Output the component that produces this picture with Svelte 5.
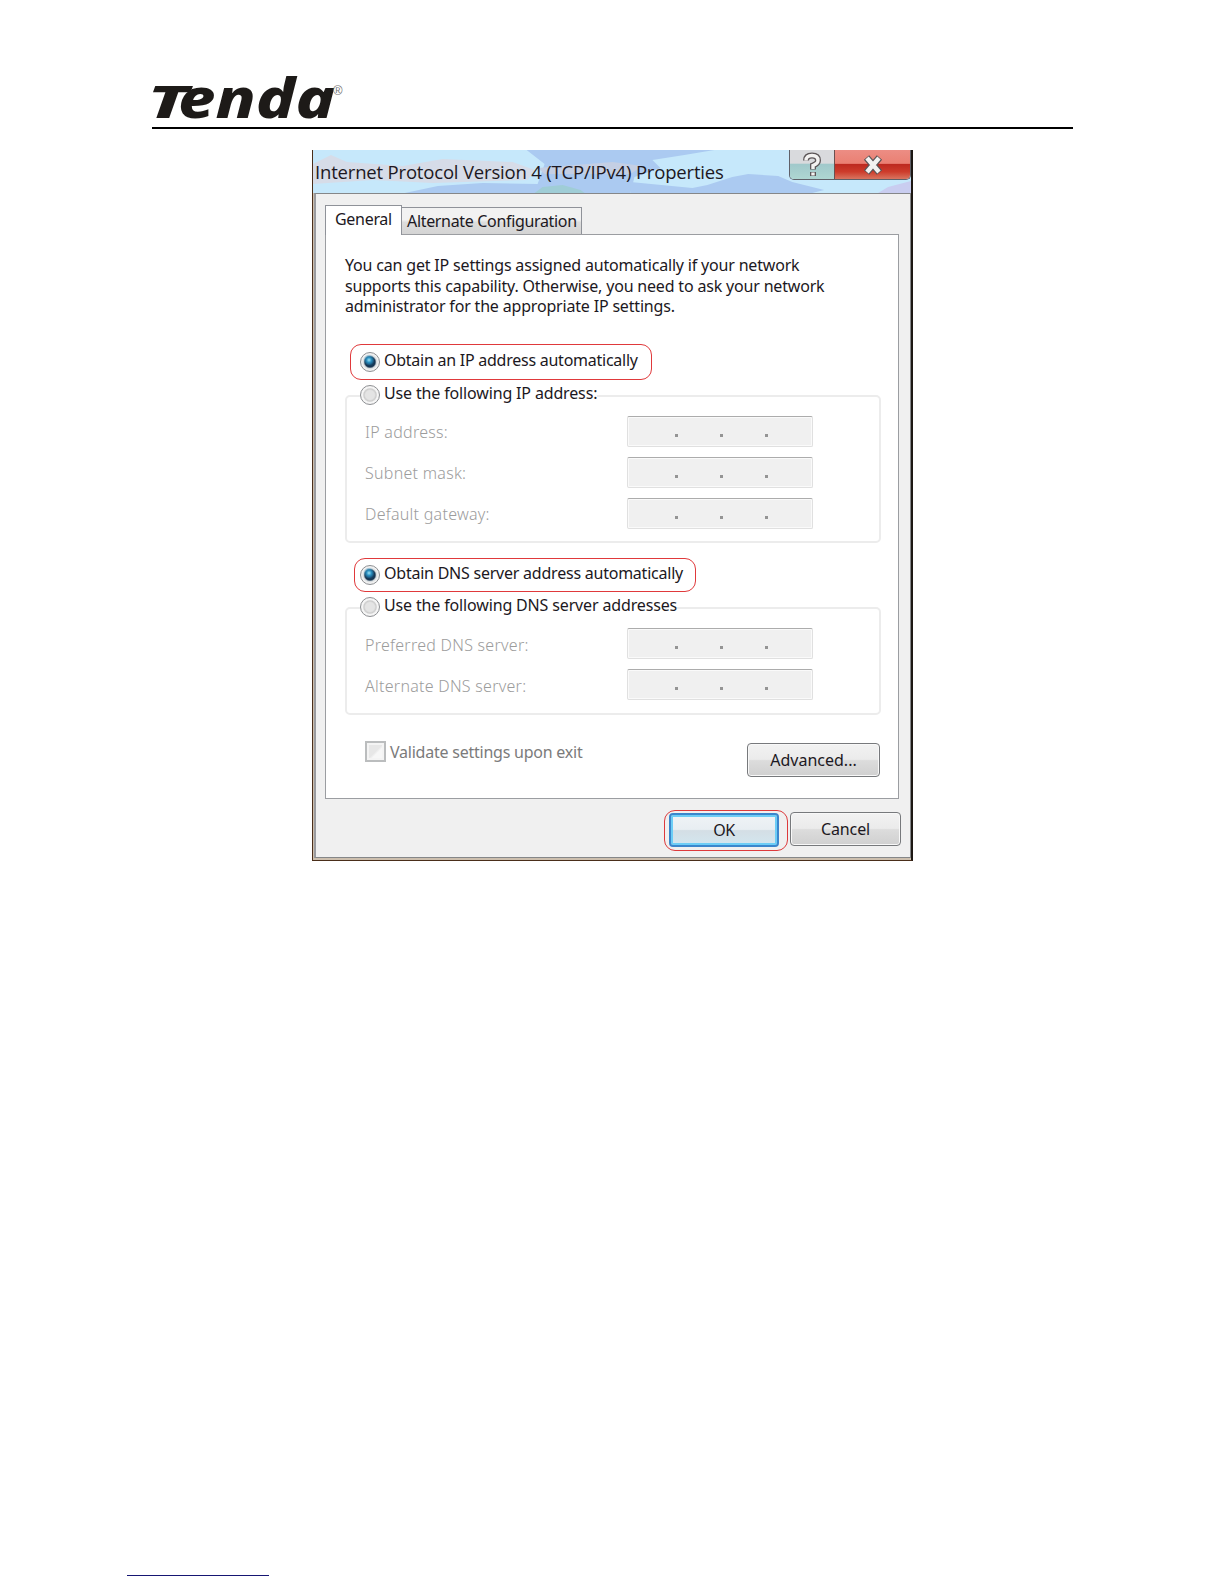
<script lang="ts">
    let ipMode = $state("auto");
    let dnsMode = $state("auto");

    const intro = [
        "You can get IP settings assigned automatically if your network",
        "supports this capability. Otherwise, you need to ask your network",
        "administrator for the appropriate IP settings.",
    ];
    const ipFields = ["IP address:", "Subnet mask:", "Default gateway:"];
    const dnsFields = ["Preferred DNS server:", "Alternate DNS server:"];
</script>

{#snippet radio(label: string, checked: boolean, select: () => void)}
    <button class="radio" role="radio" aria-checked={checked} onclick={select}>
        <i class="dot" class:checked></i>
        <span>{label}</span>
    </button>
{/snippet}

{#snippet fields(names: string[])}
    {#each names as name}
        <div class="field">
            <span class="label">{name}</span>
            <div class="ip"><b></b><b></b><b></b></div>
        </div>
    {/each}
{/snippet}

<div class="page">
    <header>
        <svg class="logo" width="200" height="56" viewBox="0 0 200 56">
            <text class="brand" y="49">
                <tspan x="-5" font-size="44" textLength="41" lengthAdjust="spacingAndGlyphs">T</tspan><tspan x="26" font-size="56" textLength="157" lengthAdjust="spacingAndGlyphs">enda</tspan>
            </text>
            <text class="reg" x="181" y="26" font-size="13">®</text>
        </svg>
    </header>

    <div class="window">
        <div class="titlebar">
            <svg class="sky" width="599" height="43" viewBox="0 0 599 43" preserveAspectRatio="none">
                <rect width="599" height="43" fill="#c6e8fb" />
                <path d="M0 14L18 5L34 12L90 16L130 9L200 12L222 20L215 30L120 33L60 30L0 34Z" fill="#d6dce8" />
                <path d="M92 43L125 36L170 33L225 34L232 14L214 0H402L372 5L340 10L348 18L322 27L318 43Z" fill="#abcaf1" />
                <path d="M225 18L300 12L330 16L318 24H232Z" fill="#c4cfe4" />
                <path d="M318 43V32L380 38L395 35L420 27L436 24L466 26L480 32L512 40L500 43Z" fill="#abcaf1" />
                <path d="M222 43L230 37L250 35L268 40L272 43Z" fill="#9fcdd6" />
                <path d="M566 43L576 37L599 31V43Z" fill="#c9cdf0" />
            </svg>
            <span class="title">Internet Protocol Version 4 (TCP/IPv4) Properties</span>
            <div class="controls">
                <button class="help" aria-label="Help">
                    <svg width="20" height="28" viewBox="0 0 20 28">
                        <path d="M4 9.500Q4 4.500 10 4.500T16 9.500Q16 12.500 11 14.500V18.500M11 21V25" class="edge" />
                        <path d="M4 9.500Q4 4.500 10 4.500T16 9.500Q16 12.500 11 14.500V18M11 21.500V24.500" class="core" />
                    </svg>
                </button>
                <button class="close" aria-label="Close">
                    <svg width="22" height="20" viewBox="0 0 22 20">
                        <path d="M4.500 2.500L17.500 17.500M17.500 2.500L4.500 17.500" class="edge" />
                        <path d="M5 3L17 17M17 3L5 17" class="core" />
                    </svg>
                </button>
            </div>
        </div>

        <div class="client">
            <div class="tabs">
                <button class="tab active">General</button>
                <button class="tab alt">Alternate Configuration</button>
            </div>

            <div class="panel">
                <div class="intro">
                    {#each intro as line}
                        <div>{line}</div>
                    {/each}
                </div>

                <div class="highlight ip-auto">
                    {@render radio("Obtain an IP address automatically", ipMode === "auto", () => (ipMode = "auto"))}
                </div>
                <div class="group ip-group">
                    <div class="legend">
                        {@render radio("Use the following IP address:", ipMode === "manual", () => (ipMode = "manual"))}
                    </div>
                    {@render fields(ipFields)}
                </div>

                <div class="highlight dns-auto">
                    {@render radio("Obtain DNS server address automatically", dnsMode === "auto", () => (dnsMode = "auto"))}
                </div>
                <div class="group dns-group">
                    <div class="legend">
                        {@render radio("Use the following DNS server addresses", dnsMode === "manual", () => (dnsMode = "manual"))}
                    </div>
                    {@render fields(dnsFields)}
                </div>

                <div class="bottom">
                    <div class="validate"><i class="check"></i><span>Validate settings upon exit</span></div>
                    <button class="btn advanced">Advanced...</button>
                </div>
            </div>

            <div class="actions">
                <div class="ok-ring"><button class="btn ok">OK</button></div>
                <button class="btn cancel">Cancel</button>
            </div>
        </div>
    </div>

    <footer><div class="note-rule"></div></footer>
</div>

<style>
    :global(body) {
        background: #fff;
    }
    .page {
        width: 1224px;
        height: 1584px;
        box-sizing: border-box;
        display: flex;
        flex-direction: column;
        overflow: hidden;
        font-family: "Noto Sans", "Open Sans", sans-serif;
        font-size: 16px;
        color: #1c1822;
    }
    .page * {
        box-sizing: border-box;
    }
    button {
        font: inherit;
        color: inherit;
        padding: 0;
        border: 0;
        background: none;
        white-space: nowrap;
    }
    header {
        width: 921px;
        height: 129px;
        margin-left: 152px;
        padding-top: 69px;
        border-bottom: 2px solid #000;
    }
    .logo {
        display: block;
        overflow: visible;
    }
    .brand {
        font-family: "Noto Sans", sans-serif;
        font-weight: 800;
        font-style: italic;
        fill: #1d1a18;
    }
    .reg {
        font-family: "Liberation Sans", sans-serif;
        fill: #777;
    }

    /* Dialog window */
    .window {
        width: 601px;
        height: 711px;
        margin: 21px 0 0 312px;
        display: flex;
        flex-direction: column;
        border: 1px solid #4a2e1a;
        border-top: 0;
        border-right: 2px solid #1c1713;
        background: #cdbfae;
    }
    .titlebar {
        position: relative;
        display: flex;
        height: 43px;
        justify-content: space-between;
    }
    .sky {
        position: absolute;
        left: 0;
        top: 0;
        width: 100%;
    }
    .title {
        position: relative;
        margin: 9px 0 0 2px;
        font-family: "Open Sans", "Noto Sans", sans-serif;
        font-size: 18.5px;
        line-height: 26px;
        letter-spacing: -0.18px;
        white-space: nowrap;
    }
    .controls {
        position: relative;
        display: flex;
        height: 30px;
        border: 1px solid #5f6068;
        border-top: 0;
        border-radius: 0 0 5px 5px;
        overflow: hidden;
    }
    .controls button {
        display: flex;
        justify-content: center;
        align-items: center;
    }
    .controls .help {
        width: 45px;
        background: linear-gradient(#d9dadd 0 45%, #a1c9cb 50%, #aed6d2);
        border-right: 1px solid #6a5050;
    }
    .controls .close {
        width: 75px;
        background: linear-gradient(#ec8d84, #ea8073 46%, #bd2a20 50%, #cd3c2b 75%, #d97560);
    }
    .edge, .core {
        fill: none;
        stroke: #5c5658;
        stroke-width: 7;
    }
    .core {
        stroke: #f3f2f1;
        stroke-width: 4.4;
    }
    .help .edge {
        stroke-width: 6;
    }
    .help .core {
        stroke-width: 3.4;
    }
    .client {
        flex: 1;
        margin: 0 0 2px 1px;
        padding: 10px 0 0 10px;
        background: #f0f0f0;
        border: 1px solid #858789;
        border-left: 2px solid #9a9b9f;
    }

    /* Tabs and their panel */
    .tabs {
        display: flex;
        align-items: flex-end;
        height: 30px;
        margin-left: -1px;
    }
    .tab {
        border: 1px solid #8f9299;
        border-bottom: 0;
        text-align: left;
    }
    .tab.active {
        position: relative;
        width: 77px;
        height: 30px;
        margin-bottom: -1px;
        padding: 0 0 4px 9px;
        background: #fff;
        letter-spacing: -0.3px;
    }
    .tab.alt {
        width: 180px;
        height: 27px;
        padding-left: 5px;
        border-left: 0;
        background: linear-gradient(#f2f2f2 45%, #dddddd 55%, #d4d4d4);
        letter-spacing: -0.33px;
    }
    .panel {
        width: 574px;
        height: 565px;
        margin-left: -1px;
        padding: 20px 17px 0 19px;
        background: #fff;
        border: 1px solid #9b9da1;
    }
    .intro {
        height: 89px;
        line-height: 20.5px;
        letter-spacing: -0.18px;
        white-space: nowrap;
    }
    .highlight {
        display: flex;
        border: 1px solid #e0393b;
        border-radius: 11px;
    }
    .ip-auto {
        width: 302px;
        height: 36px;
        margin-left: 5px;
        padding: 7px 0 0 9px;
        letter-spacing: -0.25px;
    }
    .dns-auto {
        width: 342px;
        height: 34px;
        margin: 15px 0 0 9px;
        padding: 6px 0 0 5px;
        letter-spacing: -0.23px;
    }
    .radio {
        display: flex;
        height: 21px;
        gap: 4px;
        line-height: 17px;
        letter-spacing: inherit;
    }
    .dot {
        width: 20px;
        height: 20px;
        border: 1px solid #8d8f92;
        border-radius: 50%;
        background: radial-gradient(circle, #e4e4e4 0 35%, #cccccc 48%, #f5f5f5 58%);
    }
    .dot.checked {
        background:
            radial-gradient(circle at 8px 7px, #9be2f5 0, #2b8fc0 2.5px, #0f4c7800 5.5px),
            radial-gradient(circle, #14507c 0, #173450 5px, #d6dbde 6.500px, #f2f2f2 8px);
    }
    .group {
        width: 536px;
        border: 2px solid #ececec;
        border-radius: 5px;
    }
    .ip-group {
        height: 148px;
        margin-top: 15px;
    }
    .dns-group {
        height: 108px;
        margin-top: 15px;
    }
    .legend {
        display: flex;
        height: 21px;
        margin: -12px 0 10px 13px;
        letter-spacing: -0.15px;
    }
    .legend .radio {
        background: #fff;
        border-radius: 10px 0 0 10px;
    }
    .field {
        display: flex;
        height: 31px;
        margin: 0 0 10px 18px;
        color: #9c9c9c;
    }
    .label {
        width: 262px;
        font-weight: 300;
        line-height: 33px;
        letter-spacing: 0.27px;
    }
    .dns-group .label {
        line-height: 34px;
    }
    .ip {
        display: flex;
        width: 186px;
        padding: 17px 0 0 47px;
        gap: 42px;
        border: 1px solid #e0e0e0;
        border-top-color: #acacac;
        border-radius: 2px;
        background: #f0f0f0;
        box-shadow: inset 0 0 0 1px #fafafa;
    }
    .ip b {
        width: 3px;
        height: 3px;
        background: #949494;
    }
    .bottom {
        display: flex;
        justify-content: space-between;
        margin: 26px 0 0 20px;
    }
    .validate {
        display: flex;
        gap: 4px;
        color: #7b7b7b;
        line-height: 22px;
        letter-spacing: -0.23px;
    }
    .check {
        width: 21px;
        height: 21px;
        border: 2px solid #bbbdbe;
        background: linear-gradient(135deg, #e7e7e7 50%, #f7f7f7 60%);
        box-shadow: inset 0 0 0 2px #f4f4f4;
    }

    /* Push buttons */
    .btn {
        height: 34px;
        border: 1px solid #77797c;
        border-radius: 4px;
        background: linear-gradient(#f2f2f2, #ebebeb 48%, #dcdcdc 52%, #d0d0d0);
        box-shadow: inset 0 0 0 1px #f8f8f8;
        line-height: 30px;
        text-align: center;
    }
    .advanced {
        width: 133px;
        margin: 2px 1px 0 0;
    }
    .actions {
        display: flex;
        justify-content: flex-end;
        padding: 11px 9px 0 0;
        gap: 2px;
    }
    .ok-ring {
        width: 124px;
        height: 41px;
        padding: 2px 4px;
        border: 1px solid #dd3a3c;
        border-radius: 11px;
    }
    .ok {
        width: 110px;
        border: 2px solid #3b86cc;
        background: linear-gradient(#eff3f6, #e8eef2 48%, #d4dee5 52%, #d3e6ef);
        box-shadow: inset 0 0 0 2px #6ccdf6;
        line-height: 29px;
        letter-spacing: -0.5px;
    }
    .cancel {
        width: 111px;
        margin-top: 2px;
        letter-spacing: -0.1px;
    }
    footer {
        flex: 1;
        display: flex;
        align-items: flex-end;
        padding: 0 0 8px 127px;
    }
    .note-rule {
        width: 142px;
        height: 1px;
        background: #161673;
    }
</style>
